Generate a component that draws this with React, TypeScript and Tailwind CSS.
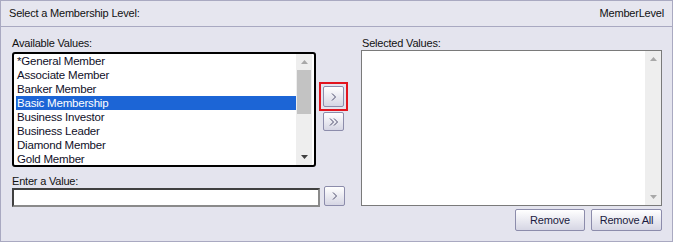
const available = [
  "*General Member",
  "Associate Member",
  "Banker Member",
  "Basic Membership",
  "Business Investor",
  "Business Leader",
  "Diamond Member",
  "Gold Member",
];

const font = "font-['Tahoma','Liberation_Sans',sans-serif]";

function Btn({ children, className = "" }: { children: React.ReactNode; className?: string }) {
  return (
    <button
      className={`flex items-center justify-center border border-[#8c8cab] rounded-[2px] bg-gradient-to-b from-white to-[#d6d6e4] text-[#1a1a40] text-[11px] leading-none ${className}`}
    >
      {children}
    </button>
  );
}

function Chevron() {
  return (
    <svg width="6" height="8" viewBox="0 0 6 8">
      <path d="M1 0.5 L4.5 4 L1 7.5" stroke="#4a4a6a" fill="none" />
    </svg>
  );
}

function Scrollbar({ thumb }: { thumb: boolean }) {
  return (
    <div className="w-[16px] h-full bg-[#eeeeee] flex flex-col items-center">
      <div className="h-[16px] flex items-center justify-center">
        <svg width="7" height="4" viewBox="0 0 7 4">
          <path d="M3.5 0 L7 4 L0 4 Z" fill="#a8a8a8" />
        </svg>
      </div>
      <div className="flex-1 w-full">
        {thumb && <div className="mx-[1px] h-[44px] bg-[#c3c3c3]" />}
      </div>
      <div className="h-[16px] flex items-center justify-center">
        <svg width="7" height="4" viewBox="0 0 7 4">
          <path d="M0 0 L7 0 L3.5 4 Z" fill={thumb ? "#404040" : "#a8a8a8"} />
        </svg>
      </div>
    </div>
  );
}

export default function App() {
  return (
    <div className={`w-[673px] h-[242px] border border-[#a9a9c1] bg-[#e4e4ee] flex flex-col text-[11px] tracking-[-0.2px] text-[#111] ${font}`}>
      {/* Header */}
      <div className="h-[26px] flex items-center justify-between pl-[8px] pr-[8px] border-b border-[#a9a9c1] bg-[#e6e6ef] shrink-0">
        <span>Select a Membership Level:</span>
        <span>MemberLevel</span>
      </div>

      <div className="flex pl-[11px] pt-[9px]">
        {/* Left side */}
        <div className="flex flex-col w-[337px]">
          <div className="h-[15px] leading-[15px]">Available Values:</div>
          <div className="flex mt-[1px]">
            <div className="w-[304px] h-[115px] border-2 border-black rounded-[3px] bg-white flex px-[2px] overflow-hidden">
              <div className="flex-1 flex flex-col">
                {available.map((v) => (
                  <div
                    key={v}
                    className={`h-[14px] leading-[14px] pl-[1px] text-[11.5px] ${
                      v === "Basic Membership" ? "bg-[#1c65d6] text-white" : "text-[#101028]"
                    }`}
                  >
                    {v}
                  </div>
                ))}
              </div>
              <Scrollbar thumb />
            </div>
            <div className="flex flex-col items-center ml-[3px] pt-[30px]">
              <div className="border-2 border-[#e2141e] p-[2px]">
                <Btn className="w-[21px] h-[21px]">
                  <Chevron />
                </Btn>
              </div>
              <Btn className="w-[21px] h-[19px] mt-[1px]">
                <svg width="10" height="8" viewBox="0 0 10 8">
                  <path d="M1 0.5 L4.5 4 L1 7.5 M5 0.5 L8.5 4 L5 7.5" stroke="#4a4a6a" fill="none" />
                </svg>
              </Btn>
            </div>
          </div>
          <div className="h-[14px] leading-[14px] mt-[7px]">Enter a Value:</div>
          <div className="flex items-start">
            <div className="w-[308px] h-[19px] border-2 border-t-[#404040] border-l-[#404040] border-r-[#8a8a8a] border-b-[#8a8a8a] bg-white" />
            <Btn className="w-[21px] h-[20px] ml-[4px] -mt-[2px]">
              <Chevron />
            </Btn>
          </div>
        </div>

        {/* Right side */}
        <div className="flex flex-col ml-[12px] w-[301px]">
          <div className="h-[14px] leading-[15px] pl-[1px]">Selected Values:</div>
          <div className="w-[301px] h-[156px] border border-[#7a7a7a] bg-white flex justify-end">
            <Scrollbar thumb={false} />
          </div>
          <div className="flex justify-end gap-[6px] mt-[3px]">
            <Btn className="w-[70px] h-[22px]">Remove</Btn>
            <Btn className="w-[71px] h-[22px]">Remove All</Btn>
          </div>
        </div>
      </div>
    </div>
  );
}
